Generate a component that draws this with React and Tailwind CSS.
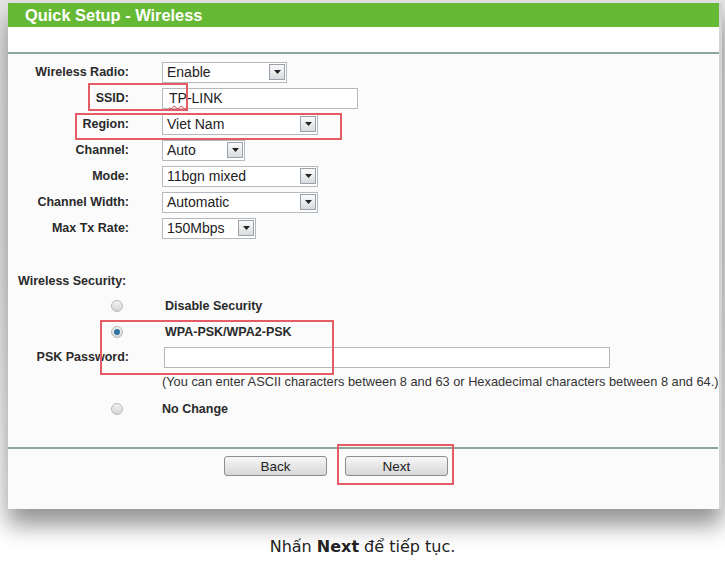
import React from "react";

const labelFont = { fontFamily: '"Liberation Sans", Arial, sans-serif' };

function Arrow() {
  return (
    <span className="flex h-[16px] w-[16px] items-center justify-center border border-[#9aa1a8] bg-gradient-to-b from-[#fbfbfb] to-[#d9dcdf]">
      <svg width="7" height="4" viewBox="0 0 7 4">
        <path d="M0 0 H7 L3.5 4 Z" fill="#222" />
      </svg>
    </span>
  );
}

function Select({ value, w }) {
  return (
    <div
      className={`flex h-[21px] items-center justify-between border border-[#b4b9be] bg-white pl-[4px] pr-[1px] text-[14px] text-[#222] ${w}`}
    >
      <span>{value}</span>
      <Arrow />
    </div>
  );
}

function Row({ label, children, h = "h-[26px]" }) {
  return (
    <div className={`flex items-center ${h}`}>
      <div className="w-[121px] shrink-0 text-right text-[12.5px] font-bold text-[#2a2a2a]">{label}</div>
      <div className="ml-[33px] flex items-center">{children}</div>
    </div>
  );
}

function Radio({ checked }) {
  return (
    <div className="flex w-[121px] shrink-0 justify-end pr-[6px]">
      <span className="flex h-[12px] w-[12px] items-center justify-center rounded-full border border-[#b9b9b9] bg-gradient-to-b from-[#f2f2f2] to-[#d6d6d6]">
        {checked && <span className="h-[6px] w-[6px] rounded-full bg-[#2f729f]" />}
      </span>
    </div>
  );
}

function Button({ children }) {
  return (
    <button className="h-[20px] w-[103px] rounded-[3px] border border-[#8e8e8e] bg-gradient-to-b from-[#f7f7f7] to-[#d7d7d7] text-[13.5px] text-[#222]">
      {children}
    </button>
  );
}

export default function App() {
  return (
    <div className="relative h-[562px] w-[725px] overflow-hidden bg-white" style={labelFont}>
      <div className="bg-gradient-to-b from-[#e3e3e3] via-[#e6e6e6] to-white pl-[8px] pr-[3px] pt-[3px]">
        <div className="h-[506px] border-r-[3px] border-[#d3d3d3] bg-[#fbfbfb] shadow-[0_16px_22px_rgba(0,0,0,0.42)]">
          {/* Header */}
          <div className="flex h-[24px] items-center bg-[#66b934] pl-[17px] text-[16.4px] font-bold text-white">
            Quick Setup - Wireless
          </div>
          <div className="h-[25px] bg-white" />
          <div className="h-[2px] bg-[#8ea697]" />

          {/* Form */}
          <div className="pt-[5px]">
            <Row label="Wireless Radio:">
              <Select value="Enable" w="w-[125px]" />
            </Row>
            <Row label="SSID:">
              <div className="flex h-[21px] w-[196px] items-center border border-[#b4b9be] bg-white pl-[6px] text-[14px] text-[#222]">
                <span className="underline decoration-wavy decoration-[#e04040] decoration-1 underline-offset-2">TP</span>
                <span>-LINK</span>
              </div>
            </Row>
            <Row label="Region:">
              <Select value="Viet Nam" w="w-[156px]" />
            </Row>
            <Row label="Channel:">
              <Select value="Auto" w="w-[83px]" />
            </Row>
            <Row label="Mode:">
              <Select value="11bgn mixed" w="w-[156px]" />
            </Row>
            <Row label="Channel Width:">
              <Select value="Automatic" w="w-[156px]" />
            </Row>
            <Row label="Max Tx Rate:">
              <Select value="150Mbps" w="w-[94px]" />
            </Row>

            <div className="mt-[28px] flex h-[24px] items-center pl-[10px] text-[12.5px] font-bold text-[#2a2a2a]">
              Wireless Security:
            </div>

            <div className="flex h-[26px] items-center">
              <Radio />
              <span className="ml-[36px] text-[12.5px] font-bold text-[#2a2a2a]">Disable Security</span>
            </div>
            <div className="flex h-[26px] items-center">
              <Radio checked />
              <span className="ml-[36px] text-[12.5px] font-bold text-[#2a2a2a]">WPA-PSK/WPA2-PSK</span>
            </div>
            <Row label="PSK Password:" h="h-[24px]">
              <div className="ml-[2px] h-[21px] w-[446px] border border-[#b4b9be] bg-white" />
            </Row>
            <div className="flex h-[26px] items-center whitespace-nowrap pl-[154px] text-[12.8px] text-[#333]">
              (You can enter ASCII characters between 8 and 63 or Hexadecimal characters between 8 and 64.)
            </div>
            <div className="flex h-[28px] items-center">
              <Radio />
              <span className="ml-[33px] text-[12.5px] font-bold text-[#2a2a2a]">No Change</span>
            </div>
          </div>

          <div className="mt-[24px] h-[2px] w-[710px] bg-[#8ea697]" />
          <div className="flex gap-[18px] pl-[216px] pt-[7px]">
            <Button>Back</Button>
            <Button>Next</Button>
          </div>
        </div>
        <div className="h-[28px]" />
      </div>

      <div
        className="text-center text-[16px] leading-[20px] text-[#222]"
        style={{ fontFamily: '"DejaVu Sans", Verdana, sans-serif' }}
      >
        Nhấn <b>Next</b> để tiếp tục.
      </div>

      {/* Red highlight boxes */}
      <div className="absolute left-[88px] top-[83px] h-[28px] w-[100px] border-2 border-[#e45c66]" />
      <div className="absolute left-[75px] top-[113px] h-[27px] w-[267px] border-2 border-[#e45c66]" />
      <div className="absolute left-[100px] top-[320px] h-[55px] w-[234px] border-2 border-[#e45c66]" />
      <div className="absolute left-[337px] top-[444px] h-[41px] w-[117px] border-2 border-[#e45c66]" />
    </div>
  );
}
